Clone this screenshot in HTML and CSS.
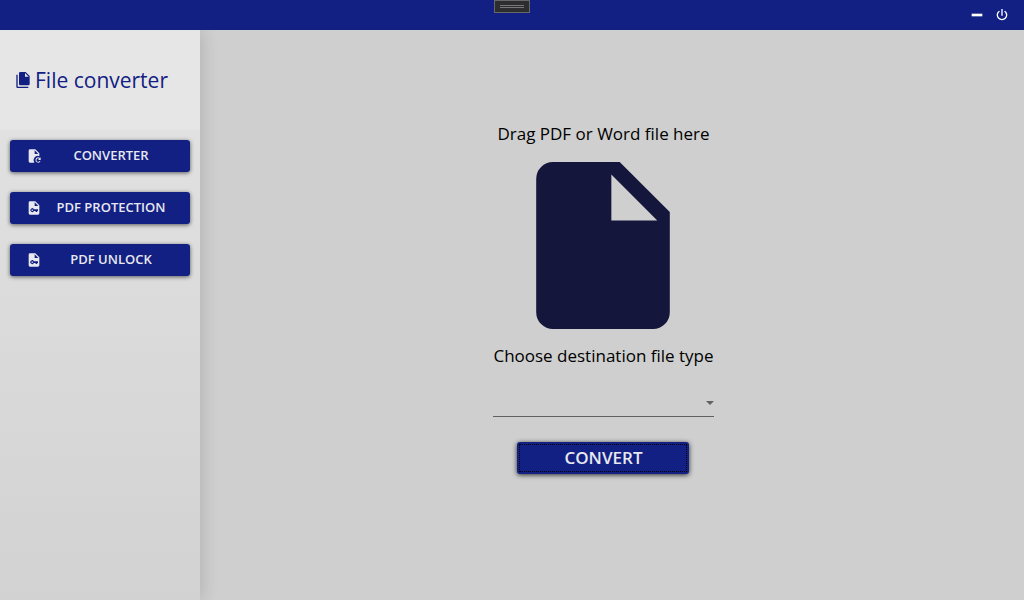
FILE: index.html
```html
<!DOCTYPE html>
<html lang="en">
<head>
<meta charset="utf-8">
<title>File converter</title>
<link rel="stylesheet" href="styles.css">
</head>
<body>
<header class="titlebar">
  <div class="grip"><span class="grip-lines"></span></div>
  <button class="window-btn" type="button" aria-label="Minimize"><svg class="icon" viewBox="0 0 24 24"><path d="M20 14H4v-4h16z"/></svg></button>
  <button class="window-btn" type="button" aria-label="Close"><svg class="icon" viewBox="0 0 24 24"><path d="M16.56 5.44l-1.45 1.45A6 6 0 1 1 8.88 6.88L7.44 5.44A8 8 0 1 0 16.56 5.44M13 3h-2v10h2z"/></svg></button>
</header>
<div class="layout">
  <aside class="sidebar">
    <h1 class="brand">
      <svg class="brand-icon" viewBox="2 0 20 24"><path d="M15 7h5.500L15 1.500V7M8 0h8l6 6v12a2 2 0 0 1-2 2H8a2 2 0 0 1-2-2V2a2 2 0 0 1 2-2M4 4v18h16v2H4a2 2 0 0 1-2-2V4z"/></svg>
      <span>File converter</span>
    </h1>
    <nav class="menu">
      <button class="btn menu-btn" type="button">
        <svg class="icon" viewBox="0 0 24 24"><path d="M13 9h5.500L13 3.500zM6 2h8l6 6v4.200a6.500 6.500 0 0 0-7.500 9.800H6a2 2 0 0 1-2-2V4a2 2 0 0 1 2-2zM18 14c1.100 0 2.100.450 2.830 1.170L22 14v4h-4l1.770-1.770A2.500 2.500 0 1 0 20.200 19.500h1.620A4 4 0 1 1 18 14z"/></svg>
        <span class="menu-label">CONVERTER</span>
      </button>
      <button class="btn menu-btn" type="button">
        <svg class="icon" viewBox="0 0 24 24"><path fill-rule="evenodd" d="M14 2H6a2 2 0 0 0-2 2v16a2 2 0 0 0 2 2h12a2 2 0 0 0 2-2V8zM13 3.500L18.500 9H13zM11.800 14H18v2.500h-1.200V18h-2.500v-1.500h-2.500a2.800 2.800 0 1 1 0-2.500zM9.300 14.200a1.100 1.100 0 1 0 .01 0z"/></svg>
        <span class="menu-label">PDF PROTECTION</span>
      </button>
      <button class="btn menu-btn" type="button">
        <svg class="icon" viewBox="0 0 24 24"><path fill-rule="evenodd" d="M14 2H6a2 2 0 0 0-2 2v16a2 2 0 0 0 2 2h12a2 2 0 0 0 2-2V8zM13 3.500L18.500 9H13zM11.800 14H18v2.500h-1.200V18h-2.500v-1.500h-2.500a2.800 2.800 0 1 1 0-2.500zM9.300 14.200a1.100 1.100 0 1 0 .01 0z"/></svg>
        <span class="menu-label">PDF UNLOCK</span>
      </button>
    </nav>
  </aside>
  <main class="content">
    <form class="converter">
      <p class="prompt">Drag PDF or Word file here</p>
      <svg class="drop-icon" viewBox="4 2 16 20"><path d="M13 9V3.500L18.500 9M6 2a2 2 0 0 0-2 2v16a2 2 0 0 0 2 2h12a2 2 0 0 0 2-2V8l-6-6z"/></svg>
      <label class="prompt" for="type">Choose destination file type</label>
      <div class="select-wrap">
        <select class="select" id="type"><option></option></select>
      </div>
      <button class="btn convert-btn" type="button">CONVERT</button>
    </form>
  </main>
</div>
</body>
</html>
```

FILE: styles.css
```css
* { box-sizing: border-box; }

body {
  margin: 0;
  min-height: 100vh;
  display: flex;
  flex-direction: column;
  background: #cfcfcf;
  color: #000;
  font-family: "Open Sans", "Noto Sans", sans-serif;
}

svg { display: block; fill: currentColor; flex: none; }
.icon { width: 16px; height: 16px; }

.titlebar {
  position: relative;
  display: flex;
  justify-content: flex-end;
  align-items: center;
  gap: 9px;
  height: 30px;
  padding-right: 14px;
  background: #122083;
}

.grip {
  position: absolute;
  top: 0;
  left: 50%;
  transform: translateX(-50%);
  width: 36px;
  height: 13px;
  padding: 4px 5px;
  border: 1px solid #686868;
  background: #2d2d30;
}

.grip-lines {
  display: block;
  height: 3px;
  border: solid #777;
  border-width: 1px 0;
}

.window-btn {
  padding: 0;
  border: 0;
  background: none;
  color: #fff;
}

.layout { flex: 1; display: flex; }

.sidebar {
  width: 200px;
  background: linear-gradient(#e4e4e4, #d2d2d2);
  box-shadow: 2px 0 16px rgba(0, 0, 0, 0.14);
}

.brand {
  display: flex;
  align-items: center;
  gap: 5px;
  height: 100px;
  margin: 0;
  padding-left: 16px;
  background: #e6e6e6;
  color: #122083;
  font-size: 21px;
  font-weight: 400;
}

.brand-icon { width: 14px; height: 16px; }

.menu {
  display: flex;
  flex-direction: column;
  gap: 20px;
  padding: 10px;
}

.btn {
  height: 32px;
  border: 0;
  border-radius: 3px;
  background: #122083;
  color: #e8e8f0;
  font-family: inherit;
  font-weight: 600;
  box-shadow: 0 1px 4px rgba(0, 0, 0, 0.6);
}

.menu-btn {
  display: flex;
  align-items: center;
  padding: 0 16px;
  font-size: 13px;
}

.menu-label { flex: 1; padding: 0 0 2px 6px; white-space: nowrap; }

.content {
  flex: 1;
  display: flex;
  justify-content: center;
  padding: 92px 17px 0 0;
}

.converter {
  display: flex;
  flex-direction: column;
  align-items: center;
}

.prompt {
  margin: 0;
  font-size: 17px;
  line-height: 24px;
  white-space: nowrap;
}

.drop-icon {
  width: 134px;
  height: 167px;
  margin: 16px 0 15px;
  color: #15163c;
}

.select-wrap { position: relative; width: 100%; margin: 20px 0 25px; }

.select-wrap::after {
  content: "";
  position: absolute;
  top: 13px;
  right: 0;
  border: solid transparent;
  border-width: 4px 4px 0;
  border-top-color: #616161;
}

.select {
  display: block;
  width: 100%;
  height: 29px;
  appearance: none;
  border: 0;
  border-bottom: 1px solid #616161;
  border-radius: 0;
  background: none;
  font: inherit;
}

.convert-btn {
  width: 172px;
  padding: 0 0 2px;
  font-size: 17px;
  outline: 1px dotted #000;
  outline-offset: -3px;
  box-shadow: 0 1px 5px rgba(0, 0, 0, 0.8);
}
```
